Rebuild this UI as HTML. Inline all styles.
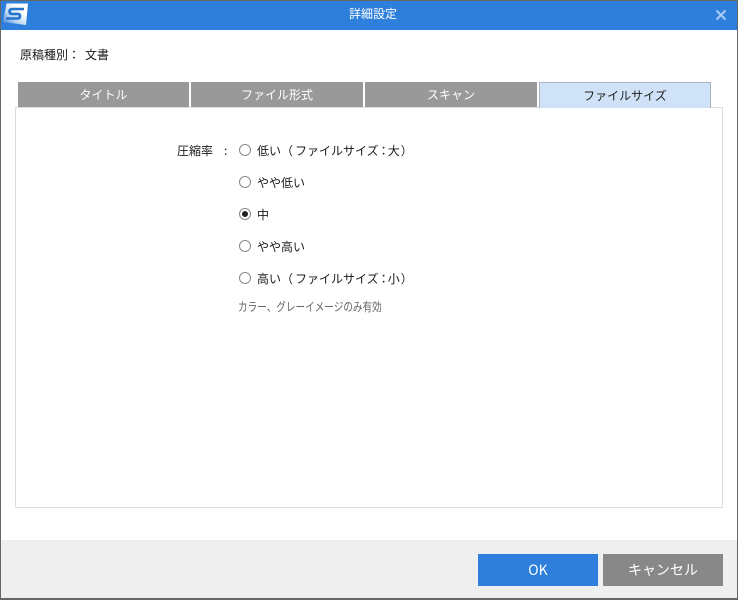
<!DOCTYPE html>
<html lang="ja"><head><meta charset="utf-8"><title>詳細設定</title>
<style>
html,body{margin:0;padding:0;background:#fff}
body{width:738px;height:600px;position:relative;overflow:hidden;font-family:"Noto Sans CJK JP","Liberation Sans",sans-serif;font-size:12px;color:#1a1a1a}
div{position:absolute;box-sizing:border-box;white-space:nowrap}
.t{line-height:18px}
.tab{top:82px;height:25px;background:#999;color:#fff;text-align:center;line-height:26px;font-size:12px}
.r{left:239px;width:12px;height:12px;border:1px solid #888;border-radius:50%;background:#fff}
.l{left:257px;line-height:18px;font-size:12px}
.btn{top:554px;width:120px;height:32px;color:#fff;text-align:center;line-height:32px;font-size:14px}
.a{margin-left:2px}.b{margin-left:-1px;margin-right:-2px}.c{margin-left:1px}
</style></head><body>
<div style="left:0;top:0;width:738px;height:600px;border:1px solid #666;border-width:1px 1px 2px 1px;"></div>
<div style="left:1px;top:1px;width:736px;height:29px;background:#2e7fdb"></div>
<svg style="position:absolute;left:0;top:0" width="32" height="28" viewBox="0 0 32 28">
<defs><linearGradient id="g" x1="0" y1="1" x2="1" y2="0"><stop offset="0" stop-color="#3a7fcf"/><stop offset=".35" stop-color="#b8d6f4"/><stop offset=".7" stop-color="#fff"/></linearGradient></defs>
<path d="M6.500 3.500 L28 3.500 L26 25 L3 22 Z" fill="url(#g)"/>
<path d="M24 9 H12.500 Q9.500 9 9.500 11.500 Q9.500 14 12.500 14 H18 Q20 14 20 16 Q20 18.500 17.500 18.500 H6" fill="none" stroke="#2372cc" stroke-width="2.600"/>
</svg>
<div class="t" style="left:0;top:5px;width:746px;text-align:center;color:#fff;font-size:12px">詳細設定</div>
<svg style="position:absolute;left:715px;top:9px" width="12" height="12" viewBox="0 0 12 12"><path d="M1.500 1.500 L10.500 10.500 M10.500 1.500 L1.500 10.500" stroke="#a9cdf3" stroke-width="2"/></svg>
<div class="t" style="left:20px;top:46px;font-size:12px">原稿種別：</div>
<div class="t" style="left:85px;top:46px;font-size:12px">文書</div>
<div style="left:15px;top:107px;width:708px;height:401px;border:1px solid #ddd;background:#fff"></div>
<div class="tab" style="left:18px;width:171px">タイトル</div>
<div class="tab" style="left:191px;width:172px">ファイル形式</div>
<div class="tab" style="left:365px;width:172px">スキャン</div>
<div class="tab" style="left:539px;width:172px;height:26px;background:#d0e2f7;color:#222;border:1px solid #aab4be;border-bottom:0;line-height:25px">ファイルサイズ</div>
<div class="t" style="left:177px;top:142px">圧縮率</div>
<div class="t" style="left:224px;top:142px">:</div>
<div class="r" style="top:144px"></div><div class="l" style="top:142px">低い（<span class="a"></span>ファイルサイズ<span class="b">：</span>大<span class="c">）</span></div>
<div class="r" style="top:176px"></div><div class="l" style="top:174px">やや低い</div>
<div class="r" style="top:208px"></div><div style="left:242px;top:211px;width:6px;height:6px;border-radius:50%;background:#222"></div><div class="l" style="top:206px">中</div>
<div class="r" style="top:240px"></div><div class="l" style="top:238px">やや高い</div>
<div class="r" style="top:272px"></div><div class="l" style="top:270px">高い（<span class="a"></span>ファイルサイズ<span class="b">：</span>小<span class="c">）</span></div>
<div class="t" style="left:238px;top:298px;font-size:12px;color:#666;transform:scaleX(.8);transform-origin:0 50%">カラー、グレーイメージのみ有効</div>
<div style="left:1px;top:540px;width:736px;height:58px;background:#efefef"></div>
<div class="btn" style="left:478px;background:#2e7fdb">OK</div>
<div class="btn" style="left:603px;background:#888">キャンセル</div>
</body></html>
